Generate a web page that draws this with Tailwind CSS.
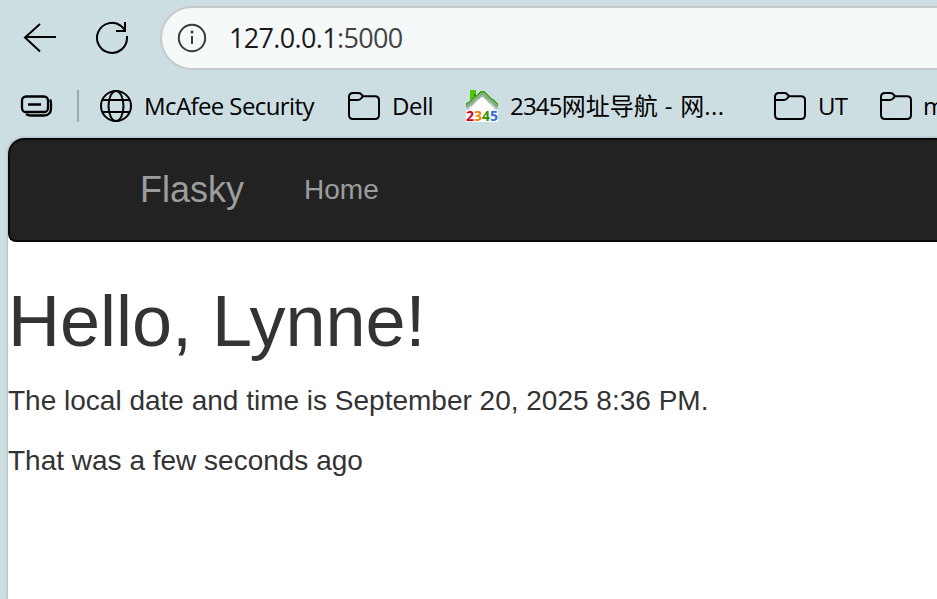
<!DOCTYPE html>
<html lang="en">
<head>
<meta charset="utf-8">
<title>Flasky</title>
<script src="https://cdn.jsdelivr.net/npm/@tailwindcss/browser@4"></script>
</head>
<body class="w-[937px] h-[599px] overflow-hidden bg-[#ccdee2] flex flex-col font-['Open_Sans','Noto_Sans_CJK_SC',sans-serif] text-black">
<svg class="hidden">
  <symbol id="folder" viewBox="0 0 34 30"><path d="M2 8.500V6q0-4 4-4h5.500q2 0 3.500 2L16 5.200H28q4 0 4 4V24q0 4-4 4H6q-4 0-4-4ZM2 9H11q2 0 3.500-2L16 5.200" fill="none" stroke="currentColor" stroke-width="2" stroke-linejoin="round"/></symbol>
</svg>
<header class="shrink-0 h-[138px]">
  <div class="flex items-center h-[76px] pl-[23px]">
    <svg class="shrink-0 w-[34px] h-[30px]" viewBox="0 0 34 30" fill="none" stroke="currentColor" stroke-width="2"><path d="M17 1L2 14.500L17 28.500M2 14H33"/></svg>
    <svg class="shrink-0 ml-[38px] w-[34px] h-[34px]" viewBox="0 0 34 34" fill="none" stroke="currentColor" stroke-width="2"><path d="M32 15V17A15 15 0 1 1 26 4.900L30.500 9.500M30 1V10H21"/></svg>
    <div class="ml-[31px] grow h-16 rounded-l-full border-y-2 border-l-2 border-[#c8c9cb] bg-[#f5f9fa] flex items-center pl-[15px]">
      <svg class="shrink-0 w-[30px] h-[30px]" viewBox="0 0 30 30" fill="none" stroke="#3b3c3e" stroke-width="2"><circle cx="15" cy="15" r="13.200"/><path d="M15 13V21"/><circle cx="15" cy="9" r="1.500" fill="#3b3c3e" stroke="none"/></svg>
      <span class="ml-[22px] text-[27px] leading-9 tracking-[-0.65px] text-[#1b1b1b] whitespace-nowrap">127.0.0.1<span class="text-[#444]">:5000</span></span>
    </div>
  </div>
  <nav class="flex items-center h-[60px] pl-5 text-[24px] leading-8 whitespace-nowrap">
    <svg class="shrink-0 w-[33px] h-6" viewBox="0 0 33 24" fill="none" stroke="currentColor" stroke-width="2.300"><rect x="2" y="2.500" width="26" height="15.500" rx="4"/><path d="M8 10.500H21M30 5.500Q31 7 31 10V14Q31 21.500 24 21.500H11Q8 21.500 6 20"/></svg>
    <div class="shrink-0 ml-6 w-0.5 h-8 bg-[#9dabae]"></div>
    <div class="flex items-center shrink-0 ml-[20px] w-[248px]">
      <svg class="w-[34px] h-[34px]" viewBox="0 0 34 34" fill="none" stroke="currentColor" stroke-width="2"><circle cx="17" cy="17" r="15"/><ellipse cx="17" cy="17" rx="7.500" ry="15"/><path d="M3 11H31M3 23H31"/></svg>
      <span class="ml-[11px] tracking-[-0.6px]">McAfee Security</span>
    </div>
    <div class="flex items-center shrink-0 w-[119px]">
      <svg class="w-[34px] h-[30px]"><use href="#folder"/></svg><span class="ml-[11px] tracking-[-0.5px]">Dell</span>
    </div>
    <div class="flex items-center shrink-0 w-[307px]">
      <svg class="w-8 h-8" viewBox="0 0 32 32">
        <g shape-rendering="crispEdges">
          <path d="M0 20H32V32H0Z" fill="#fff"/>
          <path d="M4 18L16 7L28 18V21H4Z" fill="#fff"/>
          <path d="M4 0H10V8L4 12Z" fill="#4bc800"/><path d="M8 4H10V6H8Z" fill="#2c7200"/>
          <path d="M0 17L15 4H18L32 17" fill="none" stroke="#a3b8a4" stroke-width="5"/>
          <path d="M0 15L15 2H18L32 15" fill="none" stroke="#45a51e" stroke-width="2"/>
          <path d="M1 16L15 4H18L31 16" fill="none" stroke="#88ac82" stroke-width="2"/>
        </g>
        <text x="0" y="30.500" font-size="14" font-weight="700" font-family="Noto Sans, sans-serif"><tspan fill="#d9001b">2</tspan><tspan fill="#ef8500">3</tspan><tspan fill="#329500">4</tspan><tspan fill="#3868cf">5</tspan></text>
      </svg>
      <span class="ml-3"><span class="tracking-[-0.8px]">2345</span>网址导航<span class="tracking-[0.8px]"> - </span>网<span class="tracking-[0.4px]">...</span></span>
    </div>
    <div class="flex items-center shrink-0 w-[106px]">
      <svg class="w-[34px] h-[30px]"><use href="#folder"/></svg><span class="ml-[11px] tracking-[-0.8px]">UT</span>
    </div>
    <div class="flex items-center min-w-0 grow">
      <svg class="shrink-0 w-[34px] h-[30px]"><use href="#folder"/></svg><span class="ml-[10px] min-w-0 overflow-hidden">m</span>
    </div>
  </nav>
</header>
<main class="grow ml-2 bg-white rounded-tl-[16px] text-[#333] font-['Liberation_Sans',Arial,sans-serif] text-[28px] leading-10 shadow-[0_0_3px_rgba(0,0,0,0.3)]">
  <nav class="h-[104px] bg-[#222] border-y-2 border-l-2 border-[#080808] rounded-tl-[16px] rounded-bl-[8px] flex items-center pl-[130px] text-[#9d9d9d]">
    <a class="text-[36px]">Flasky</a>
    <a class="ml-[60px]">Home</a>
  </nav>
  <h1 class="mt-10 text-[72px] leading-[79px] whitespace-nowrap">Hello, Lynne!</h1>
  <p class="mt-5">The local date and time is September 20, 2025 8:36 PM.</p>
  <p class="mt-5">That was a few seconds ago</p>
</main>
</body>
</html>
